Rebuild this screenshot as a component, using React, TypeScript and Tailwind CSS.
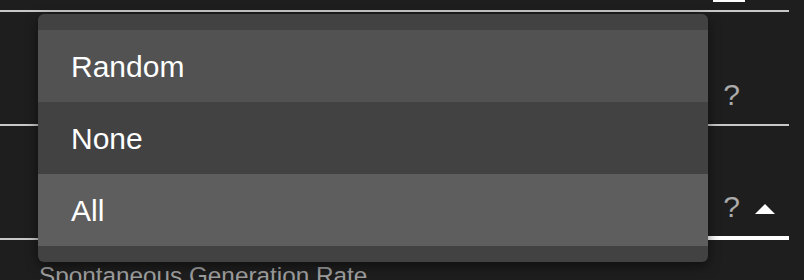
import React from "react";

const font = { fontFamily: '"Liberation Sans", Arial, sans-serif' };

const options = [
  { label: "Random", bg: "bg-[#525252]" },
  { label: "None", bg: "bg-[#424242]" },
  { label: "All", bg: "bg-[#5e5e5e]" },
];

function Help() {
  return <span className="text-[30px] leading-none text-[#ababab]">?</span>;
}

function CaretUp() {
  return (
    <svg width="20" height="10" viewBox="0 0 20 10" aria-hidden="true">
      <path d="M0 10L10 0l10 10z" fill="#ffffff" />
    </svg>
  );
}

export default function App() {
  return (
    <div
      className="relative h-[280px] w-[804px] overflow-hidden bg-[#1e1e1e]"
      style={font}
    >
      <div className="w-[789px]">
        {/* tail of the control above */}
        <div className="flex h-[10px] justify-end pr-[44px]">
          <div className="h-[2px] w-[32px] bg-white" />
        </div>
        <div className="h-[2px] bg-[#c8c8c8]" />

        {/* row: behind menu */}
        <div className="flex h-[112px] items-end justify-end pb-[14px] pr-[49px]">
          <Help />
        </div>
        <div className="h-[2px] bg-[#c8c8c8]" />

        {/* row: the open select */}
        <div className="flex h-[110px] items-end justify-end gap-[15px] pb-[14px] pr-[14px]">
          <Help />
          <div className="mb-[8px]">
            <CaretUp />
          </div>
        </div>
        <div className="flex h-[4px] items-end">
          <div className="h-[2px] flex-1 bg-[#c8c8c8]" />
          <div className="h-[4px] w-[400px] bg-white" />
        </div>
      </div>

      <div className="pl-[39px] pt-[24px] text-[24.3px] leading-none text-[#9e9e9e]">
        Spontaneous Generation Rate
      </div>

      {/* open menu */}
      <div className="absolute left-[38px] top-[14px] w-[670px] rounded-md bg-[#424242] py-4 shadow-[0_4px_12px_rgba(0,0,0,0.5)]">
        {options.map((o) => (
          <div
            key={o.label}
            className={`flex h-[72px] items-center pl-[33px] text-[30px] text-white ${o.bg}`}
          >
            {o.label}
          </div>
        ))}
      </div>
    </div>
  );
}
